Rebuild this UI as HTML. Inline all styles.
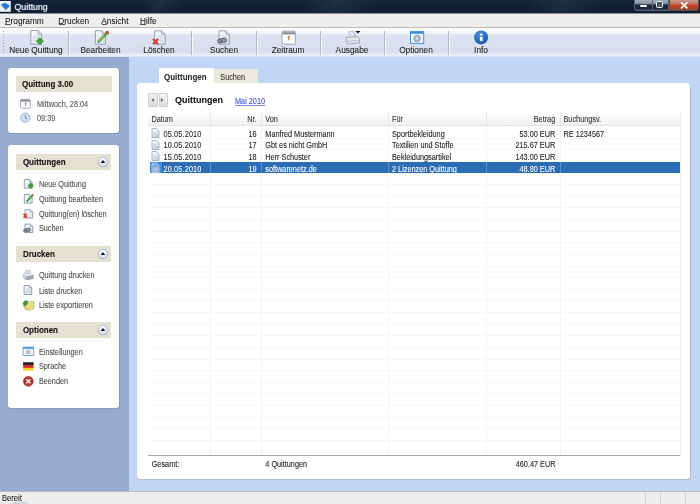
<!DOCTYPE html>
<html><head><meta charset="utf-8"><style>
html,body{margin:0;padding:0;width:700px;height:504px;overflow:hidden;background:#fff;}
body{position:relative;font-family:"Liberation Sans",sans-serif;}
.r{position:absolute;}
u{text-decoration-thickness:0.8px;text-underline-offset:0.6px;}
.t{position:absolute;white-space:nowrap;-webkit-text-stroke:0.08px currentColor;}
</style></head><body>
<div id="w" style="position:absolute;left:0;top:0;width:700px;height:504px;will-change:transform;">
<div class="r" style="left:0px;top:0px;width:700px;height:13.2px;background:linear-gradient(#142439,#0e1c30);"></div>
<div class="r" style="left:0px;top:0px;width:700px;height:13.2px;background:linear-gradient(100deg,transparent 20%,rgba(120,150,180,0.10) 23%,transparent 26%,transparent 43%,rgba(120,150,180,0.12) 48%,transparent 54%,transparent 75%,rgba(120,150,180,0.10) 80%,transparent 86%);"></div>
<div class="r" style="left:0px;top:13.2px;width:700px;height:0.8px;background:#8a9098;"></div>
<svg class="r" style="left:0;top:0" width="13" height="13" viewBox="0 0 13 13"><rect x="0" y="1" width="10.8" height="10.8" fill="#eef2f6"/><path d="M1 4.3 L5 2.8 L9.6 5.6 L5.2 9.2 Z" fill="#1f78d8"/><path d="M1 4.3 L1.3 6 L5.4 10.3 L5.2 9.2Z" fill="#8aa0b8"/><path d="M5.4 10.3 L9.6 6.6 L9.6 5.6 L5.2 9.2Z" fill="#1a5fae"/></svg>
<div class="t" style="left:14.5px;top:2.65px;font-size:8.8px;line-height:8.8px;color:#f4f8ff;transform:scaleY(1.12);transform-origin:0 7.45px;text-shadow:0 0 1.5px rgba(160,190,230,0.6);">Quittung</div>
<div class="r" style="left:633.5px;top:0px;width:35px;height:11px;background:linear-gradient(#a3adba,#838fa0 38%,#222d3d 48%,#1a2535 80%,#334052);border:1px solid #5a6575;border-top:none;border-radius:0 0 0 3px;box-sizing:border-box;"></div>
<div class="r" style="left:652px;top:0px;width:1px;height:11px;background:#596474;"></div>
<div class="r" style="left:639.5px;top:5.4px;width:7.5px;height:1.9px;background:#f4f6f8;border-radius:1px;"></div>
<div class="r" style="left:656.3px;top:1.4px;width:6.6px;height:6.6px;border:1.5px solid #eef1f4;border-radius:1.5px;box-sizing:border-box;background:#4a5566;"></div>
<div class="r" style="left:668.5px;top:0px;width:30.5px;height:11px;background:linear-gradient(#c99a8a,#b9786a 35%,#d9441e 50%,#c2401f 62%,#8f4a3c 100%);border:1px solid #5e4a48;border-top:none;border-radius:0 0 3px 0;box-sizing:border-box;"></div>
<svg class="r" style="left:668.5px;top:0" width="31" height="11" viewBox="0 0 31 11"><path d="M12 2.4 L18.4 8.4 M18.4 2.4 L12 8.4" stroke="#fff" stroke-width="1.6"/></svg>
<div class="r" style="left:0px;top:14px;width:700px;height:13.3px;background:#efeeed;"></div>
<div class="r" style="left:0px;top:27px;width:700px;height:1px;background:#bcbcbc;"></div>
<div class="t" style="left:5px;top:16.57px;font-size:8.3px;line-height:8.3px;color:#1a1a1a;transform:scaleY(1.12);transform-origin:0 7.03px;">Programm</div>
<div class="r" style="left:5.3px;top:24.1px;width:5.5px;height:0.8px;background:#555;"></div>
<div class="t" style="left:58.3px;top:16.57px;font-size:8.3px;line-height:8.3px;color:#1a1a1a;transform:scaleY(1.12);transform-origin:0 7.03px;">Drucken</div>
<div class="r" style="left:58.599999999999994px;top:24.1px;width:6px;height:0.8px;background:#555;"></div>
<div class="t" style="left:101.3px;top:16.57px;font-size:8.3px;line-height:8.3px;color:#1a1a1a;transform:scaleY(1.12);transform-origin:0 7.03px;">Ansicht</div>
<div class="r" style="left:101.6px;top:24.1px;width:5.5px;height:0.8px;background:#555;"></div>
<div class="t" style="left:140px;top:16.57px;font-size:8.3px;line-height:8.3px;color:#1a1a1a;transform:scaleY(1.12);transform-origin:0 7.03px;">Hilfe</div>
<div class="r" style="left:140.3px;top:24.1px;width:6px;height:0.8px;background:#555;"></div>
<div class="r" style="left:0px;top:28px;width:700px;height:29px;background:linear-gradient(#fdfdfe 0px,#f6f7fb 5px,#dde2f1 7px,#d9dff0 24px,#e9ecf6 26.5px,#eef1f8 28px,#c9d3e6 29px);"></div>
<div class="r" style="left:3px;top:31px;width:1px;height:24px;background-image:linear-gradient(#9aa3b3 50%,transparent 50%);background-size:1px 3px;"></div>
<div class="r" style="left:68px;top:31px;width:1px;height:24px;background:#aeb5c2;"></div>
<div class="r" style="left:69px;top:31px;width:1px;height:24px;background:#fbfcfe;"></div>
<div class="r" style="left:191px;top:31px;width:1px;height:24px;background:#aeb5c2;"></div>
<div class="r" style="left:192px;top:31px;width:1px;height:24px;background:#fbfcfe;"></div>
<div class="r" style="left:256px;top:31px;width:1px;height:24px;background:#aeb5c2;"></div>
<div class="r" style="left:257px;top:31px;width:1px;height:24px;background:#fbfcfe;"></div>
<div class="r" style="left:320px;top:31px;width:1px;height:24px;background:#aeb5c2;"></div>
<div class="r" style="left:321px;top:31px;width:1px;height:24px;background:#fbfcfe;"></div>
<div class="r" style="left:384px;top:31px;width:1px;height:24px;background:#aeb5c2;"></div>
<div class="r" style="left:385px;top:31px;width:1px;height:24px;background:#fbfcfe;"></div>
<div class="r" style="left:448px;top:31px;width:1px;height:24px;background:#aeb5c2;"></div>
<div class="r" style="left:449px;top:31px;width:1px;height:24px;background:#fbfcfe;"></div>
<div class="t" style="left:-64px;width:200px;text-align:center;top:46.37px;font-size:8.3px;line-height:8.3px;color:#1e1e1e;transform:scaleY(1.12);transform-origin:0 7.03px;">Neue Quittung</div>
<div class="t" style="left:0.5px;width:200px;text-align:center;top:46.37px;font-size:8.3px;line-height:8.3px;color:#1e1e1e;transform:scaleY(1.12);transform-origin:0 7.03px;">Bearbeiten</div>
<div class="t" style="left:59px;width:200px;text-align:center;top:46.37px;font-size:8.3px;line-height:8.3px;color:#1e1e1e;transform:scaleY(1.12);transform-origin:0 7.03px;">Löschen</div>
<div class="t" style="left:124px;width:200px;text-align:center;top:46.37px;font-size:8.3px;line-height:8.3px;color:#1e1e1e;transform:scaleY(1.12);transform-origin:0 7.03px;">Suchen</div>
<div class="t" style="left:188px;width:200px;text-align:center;top:46.37px;font-size:8.3px;line-height:8.3px;color:#1e1e1e;transform:scaleY(1.12);transform-origin:0 7.03px;">Zeitraum</div>
<div class="t" style="left:252px;width:200px;text-align:center;top:46.37px;font-size:8.3px;line-height:8.3px;color:#1e1e1e;transform:scaleY(1.12);transform-origin:0 7.03px;">Ausgabe</div>
<div class="t" style="left:316px;width:200px;text-align:center;top:46.37px;font-size:8.3px;line-height:8.3px;color:#1e1e1e;transform:scaleY(1.12);transform-origin:0 7.03px;">Optionen</div>
<div class="t" style="left:381px;width:200px;text-align:center;top:46.37px;font-size:8.3px;line-height:8.3px;color:#1e1e1e;transform:scaleY(1.12);transform-origin:0 7.03px;">Info</div>
<div class="r" style="left:0px;top:57px;width:129px;height:434px;background:#96abd0;"></div>
<div class="r" style="left:129px;top:57px;width:571px;height:434px;background:#c1d5f4;"></div>
<div class="r" style="left:0px;top:491px;width:700px;height:13px;background:#eeedeb;border-top:1px solid #b9bbbf;box-sizing:border-box;"></div>
<div class="t" style="left:2px;top:495.17px;font-size:7.6px;line-height:7.6px;color:#222;transform:scaleY(1.12);transform-origin:0 6.43px;">Bereit</div>
<div class="r" style="left:11.5px;top:501.2px;width:17px;height:6px;border-radius:50%;background:linear-gradient(#dfe6ee,#aebccc);"></div>
<div class="r" style="left:645px;top:492px;width:1px;height:12px;background:#d4d2ce;"></div>
<div class="r" style="left:660px;top:492px;width:1px;height:12px;background:#d4d2ce;"></div>
<div class="r" style="left:685px;top:492px;width:1px;height:12px;background:#d4d2ce;"></div>
<div class="r" style="left:8px;top:68.3px;width:111px;height:64.5px;background:#fff;border-radius:3px;box-shadow:0.4px 0.4px 0 0.4px rgba(100,120,150,0.45);"></div>
<div class="r" style="left:16px;top:76px;width:96px;height:16px;background:#e4e1d2;"></div>
<div class="t" style="left:22px;top:81.33px;font-size:8px;line-height:8px;color:#111;font-weight:bold;transform:scaleY(1.12);transform-origin:0 6.77px;">Quittung 3.00</div>
<div class="t" style="left:37px;top:100.92px;font-size:7.3px;line-height:7.3px;color:#555;transform:scaleY(1.12);transform-origin:0 6.18px;">Mittwoch, 28.04</div>
<div class="t" style="left:37px;top:114.92px;font-size:7.3px;line-height:7.3px;color:#555;transform:scaleY(1.12);transform-origin:0 6.18px;">09:39</div>
<div class="r" style="left:8px;top:144.5px;width:111px;height:263.7px;background:#fff;border-radius:3px;box-shadow:0.4px 0.4px 0 0.4px rgba(100,120,150,0.45);"></div>
<div class="r" style="left:15.7px;top:154.3px;width:95.6px;height:16.2px;background:#e4e1d2;"></div>
<div class="t" style="left:22.9px;top:158.93px;font-size:8px;line-height:8px;color:#111;font-weight:bold;transform:scaleY(1.12);transform-origin:0 6.77px;">Quittungen</div>
<svg class="r" style="left:96px;top:155.20000000000002px" width="14" height="14" viewBox="0 0 14 14"><defs><radialGradient id="cb154" cx="0.45" cy="0.35" r="0.7"><stop offset="0" stop-color="#ffffff"/><stop offset="0.6" stop-color="#e3e9f2"/><stop offset="1" stop-color="#b9c7da"/></radialGradient></defs><circle cx="7" cy="7" r="4.9" fill="url(#cb154)" stroke="#a3b3c9" stroke-width="0.8"/><path d="M4.6 8.1 L6.9 5.1 L9.2 8.1Z" fill="#111"/></svg>
<div class="r" style="left:15.7px;top:245.7px;width:95.6px;height:16.2px;background:#e4e1d2;"></div>
<div class="t" style="left:22.9px;top:250.73px;font-size:8px;line-height:8px;color:#111;font-weight:bold;transform:scaleY(1.12);transform-origin:0 6.77px;">Drucken</div>
<svg class="r" style="left:96px;top:246.6px" width="14" height="14" viewBox="0 0 14 14"><defs><radialGradient id="cb245" cx="0.45" cy="0.35" r="0.7"><stop offset="0" stop-color="#ffffff"/><stop offset="0.6" stop-color="#e3e9f2"/><stop offset="1" stop-color="#b9c7da"/></radialGradient></defs><circle cx="7" cy="7" r="4.9" fill="url(#cb245)" stroke="#a3b3c9" stroke-width="0.8"/><path d="M4.6 8.1 L6.9 5.1 L9.2 8.1Z" fill="#111"/></svg>
<div class="r" style="left:15.7px;top:322.1px;width:95.6px;height:16.2px;background:#e4e1d2;"></div>
<div class="t" style="left:22.9px;top:327.23px;font-size:8px;line-height:8px;color:#111;font-weight:bold;transform:scaleY(1.12);transform-origin:0 6.77px;">Optionen</div>
<svg class="r" style="left:96px;top:323.0px" width="14" height="14" viewBox="0 0 14 14"><defs><radialGradient id="cb322" cx="0.45" cy="0.35" r="0.7"><stop offset="0" stop-color="#ffffff"/><stop offset="0.6" stop-color="#e3e9f2"/><stop offset="1" stop-color="#b9c7da"/></radialGradient></defs><circle cx="7" cy="7" r="4.9" fill="url(#cb322)" stroke="#a3b3c9" stroke-width="0.8"/><path d="M4.6 8.1 L6.9 5.1 L9.2 8.1Z" fill="#111"/></svg>
<div class="t" style="left:38.9px;top:180.92px;font-size:7.3px;line-height:7.3px;color:#4a4a4a;transform:scaleY(1.12);transform-origin:0 6.18px;">Neue Quittung</div>
<div class="t" style="left:38.9px;top:195.77px;font-size:7.3px;line-height:7.3px;color:#4a4a4a;transform:scaleY(1.12);transform-origin:0 6.18px;">Quittung bearbeiten</div>
<div class="t" style="left:38.9px;top:210.52px;font-size:7.3px;line-height:7.3px;color:#4a4a4a;transform:scaleY(1.12);transform-origin:0 6.18px;">Quittung(en) löschen</div>
<div class="t" style="left:38.9px;top:225.22px;font-size:7.3px;line-height:7.3px;color:#4a4a4a;transform:scaleY(1.12);transform-origin:0 6.18px;">Suchen</div>
<div class="t" style="left:38.9px;top:272.42px;font-size:7.3px;line-height:7.3px;color:#4a4a4a;transform:scaleY(1.12);transform-origin:0 6.18px;">Quittung drucken</div>
<div class="t" style="left:38.9px;top:287.52px;font-size:7.3px;line-height:7.3px;color:#4a4a4a;transform:scaleY(1.12);transform-origin:0 6.18px;">Liste drucken</div>
<div class="t" style="left:38.9px;top:302.42px;font-size:7.3px;line-height:7.3px;color:#4a4a4a;transform:scaleY(1.12);transform-origin:0 6.18px;">Liste exportieren</div>
<div class="t" style="left:38.9px;top:348.82px;font-size:7.3px;line-height:7.3px;color:#4a4a4a;transform:scaleY(1.12);transform-origin:0 6.18px;">Einstellungen</div>
<div class="t" style="left:38.9px;top:363.42px;font-size:7.3px;line-height:7.3px;color:#4a4a4a;transform:scaleY(1.12);transform-origin:0 6.18px;">Sprache</div>
<div class="t" style="left:38.9px;top:378.27px;font-size:7.3px;line-height:7.3px;color:#4a4a4a;transform:scaleY(1.12);transform-origin:0 6.18px;">Beenden</div>
<div class="r" style="left:158.7px;top:67.7px;width:55.6px;height:16px;background:#fff;border-radius:1px 1px 0 0;"></div>
<div class="r" style="left:214.3px;top:69px;width:43.5px;height:14px;background:#ebe8dc;"></div>
<div class="t" style="left:164px;top:73.53px;font-size:8px;line-height:8px;color:#222;font-weight:bold;transform:scaleY(1.12);transform-origin:0 6.77px;-webkit-text-stroke:0;">Quittungen</div>
<div class="t" style="left:220.3px;top:73.62px;font-size:7.3px;line-height:7.3px;color:#333;transform:scaleY(1.12);transform-origin:0 6.18px;">Suchen</div>
<div class="r" style="left:137px;top:83px;width:553.3px;height:396.3px;background:#fff;border-radius:3px;box-shadow:0.4px 0.4px 0 0.4px rgba(130,150,180,0.45);"></div>
<div class="r" style="left:148px;top:93px;width:10px;height:13.6px;background:linear-gradient(#f4f4f4,#dcdcdc);border:1px solid #cdcdcd;box-sizing:border-box;border-radius:1px;"></div>
<div class="r" style="left:158.6px;top:93px;width:9.8px;height:13.6px;background:linear-gradient(#f4f4f4,#dcdcdc);border:1px solid #cdcdcd;box-sizing:border-box;border-radius:1px;"></div>
<svg class="r" style="left:148px;top:93px" width="20" height="14" viewBox="0 0 20 14"><path d="M3.4 7 L5.8 5 L5.8 9Z" fill="#4b6aa6"/><path d="M12.9 5 L15.3 7 L12.9 9Z" fill="#4b6aa6"/></svg>
<div class="t" style="left:175px;top:95.88px;font-size:9px;line-height:9px;color:#111;font-weight:bold;transform:scaleY(1.04);transform-origin:0 7.62px;">Quittungen</div>
<div class="t" style="left:235px;top:97.82px;font-size:7.3px;line-height:7.3px;color:#3a4ed6;transform:scaleY(1.12);transform-origin:0 6.18px;">Mai 2010</div>
<div class="r" style="left:235px;top:104.5px;width:30px;height:0.8px;background:#7a86e8;"></div>
<div class="r" style="left:148px;top:112.3px;width:532.3px;height:14px;background:linear-gradient(#ffffff,#f9f9f9 45%,#f1f1f1);border-bottom:1px solid #e2e2e2;box-sizing:border-box;"></div>
<div class="r" style="left:210px;top:112.5px;width:1px;height:14px;background:#e4e4e4;"></div>
<div class="r" style="left:210px;top:126px;width:1px;height:329px;background-image:linear-gradient(#eeeeee 60%,transparent 60%);background-size:1px 2.5px;"></div>
<div class="r" style="left:260.8px;top:112.5px;width:1px;height:14px;background:#e4e4e4;"></div>
<div class="r" style="left:260.8px;top:126px;width:1px;height:329px;background-image:linear-gradient(#eeeeee 60%,transparent 60%);background-size:1px 2.5px;"></div>
<div class="r" style="left:388px;top:112.5px;width:1px;height:14px;background:#e4e4e4;"></div>
<div class="r" style="left:388px;top:126px;width:1px;height:329px;background-image:linear-gradient(#eeeeee 60%,transparent 60%);background-size:1px 2.5px;"></div>
<div class="r" style="left:486.2px;top:112.5px;width:1px;height:14px;background:#e4e4e4;"></div>
<div class="r" style="left:486.2px;top:126px;width:1px;height:329px;background-image:linear-gradient(#eeeeee 60%,transparent 60%);background-size:1px 2.5px;"></div>
<div class="r" style="left:559.6px;top:112.5px;width:1px;height:14px;background:#e4e4e4;"></div>
<div class="r" style="left:559.6px;top:126px;width:1px;height:329px;background-image:linear-gradient(#eeeeee 60%,transparent 60%);background-size:1px 2.5px;"></div>
<div class="r" style="left:680px;top:112.5px;width:1px;height:342.5px;background:#ececec;"></div>
<div class="t" style="left:151.4px;top:115.82px;font-size:7.3px;line-height:7.3px;color:#333;transform:scaleY(1.12);transform-origin:0 6.18px;">Datum</div>
<div class="t" style="right:443.5px;top:115.82px;font-size:7.3px;line-height:7.3px;color:#333;transform:scaleY(1.12);transform-origin:0 6.18px;">Nr.</div>
<div class="t" style="left:265.3px;top:115.82px;font-size:7.3px;line-height:7.3px;color:#333;transform:scaleY(1.12);transform-origin:0 6.18px;">Von</div>
<div class="t" style="left:392px;top:115.82px;font-size:7.3px;line-height:7.3px;color:#333;transform:scaleY(1.12);transform-origin:0 6.18px;">Für</div>
<div class="t" style="right:144.79999999999995px;top:115.82px;font-size:7.3px;line-height:7.3px;color:#333;transform:scaleY(1.12);transform-origin:0 6.18px;">Betrag</div>
<div class="t" style="left:563.5px;top:115.82px;font-size:7.3px;line-height:7.3px;color:#333;transform:scaleY(1.12);transform-origin:0 6.18px;">Buchungsv.</div>
<div class="r" style="left:148px;top:137.63px;width:532.3px;height:1px;background-image:linear-gradient(90deg,#f0f0f0 60%,transparent 60%);background-size:2px 1px;"></div>
<div class="r" style="left:148px;top:149.26px;width:532.3px;height:1px;background-image:linear-gradient(90deg,#f0f0f0 60%,transparent 60%);background-size:2px 1px;"></div>
<div class="r" style="left:148px;top:160.89px;width:532.3px;height:1px;background-image:linear-gradient(90deg,#f0f0f0 60%,transparent 60%);background-size:2px 1px;"></div>
<div class="r" style="left:148px;top:172.52px;width:532.3px;height:1px;background-image:linear-gradient(90deg,#f0f0f0 60%,transparent 60%);background-size:2px 1px;"></div>
<div class="r" style="left:148px;top:184.15px;width:532.3px;height:1px;background-image:linear-gradient(90deg,#f0f0f0 60%,transparent 60%);background-size:2px 1px;"></div>
<div class="r" style="left:148px;top:195.78px;width:532.3px;height:1px;background-image:linear-gradient(90deg,#f0f0f0 60%,transparent 60%);background-size:2px 1px;"></div>
<div class="r" style="left:148px;top:207.41000000000003px;width:532.3px;height:1px;background-image:linear-gradient(90deg,#f0f0f0 60%,transparent 60%);background-size:2px 1px;"></div>
<div class="r" style="left:148px;top:219.04000000000002px;width:532.3px;height:1px;background-image:linear-gradient(90deg,#f0f0f0 60%,transparent 60%);background-size:2px 1px;"></div>
<div class="r" style="left:148px;top:230.67000000000002px;width:532.3px;height:1px;background-image:linear-gradient(90deg,#f0f0f0 60%,transparent 60%);background-size:2px 1px;"></div>
<div class="r" style="left:148px;top:242.3px;width:532.3px;height:1px;background-image:linear-gradient(90deg,#f0f0f0 60%,transparent 60%);background-size:2px 1px;"></div>
<div class="r" style="left:148px;top:253.93px;width:532.3px;height:1px;background-image:linear-gradient(90deg,#f0f0f0 60%,transparent 60%);background-size:2px 1px;"></div>
<div class="r" style="left:148px;top:265.56px;width:532.3px;height:1px;background-image:linear-gradient(90deg,#f0f0f0 60%,transparent 60%);background-size:2px 1px;"></div>
<div class="r" style="left:148px;top:277.19px;width:532.3px;height:1px;background-image:linear-gradient(90deg,#f0f0f0 60%,transparent 60%);background-size:2px 1px;"></div>
<div class="r" style="left:148px;top:288.82000000000005px;width:532.3px;height:1px;background-image:linear-gradient(90deg,#f0f0f0 60%,transparent 60%);background-size:2px 1px;"></div>
<div class="r" style="left:148px;top:300.45000000000005px;width:532.3px;height:1px;background-image:linear-gradient(90deg,#f0f0f0 60%,transparent 60%);background-size:2px 1px;"></div>
<div class="r" style="left:148px;top:312.08000000000004px;width:532.3px;height:1px;background-image:linear-gradient(90deg,#f0f0f0 60%,transparent 60%);background-size:2px 1px;"></div>
<div class="r" style="left:148px;top:323.71000000000004px;width:532.3px;height:1px;background-image:linear-gradient(90deg,#f0f0f0 60%,transparent 60%);background-size:2px 1px;"></div>
<div class="r" style="left:148px;top:335.34000000000003px;width:532.3px;height:1px;background-image:linear-gradient(90deg,#f0f0f0 60%,transparent 60%);background-size:2px 1px;"></div>
<div class="r" style="left:148px;top:346.97px;width:532.3px;height:1px;background-image:linear-gradient(90deg,#f0f0f0 60%,transparent 60%);background-size:2px 1px;"></div>
<div class="r" style="left:148px;top:358.6px;width:532.3px;height:1px;background-image:linear-gradient(90deg,#f0f0f0 60%,transparent 60%);background-size:2px 1px;"></div>
<div class="r" style="left:148px;top:370.23px;width:532.3px;height:1px;background-image:linear-gradient(90deg,#f0f0f0 60%,transparent 60%);background-size:2px 1px;"></div>
<div class="r" style="left:148px;top:381.86px;width:532.3px;height:1px;background-image:linear-gradient(90deg,#f0f0f0 60%,transparent 60%);background-size:2px 1px;"></div>
<div class="r" style="left:148px;top:393.49px;width:532.3px;height:1px;background-image:linear-gradient(90deg,#f0f0f0 60%,transparent 60%);background-size:2px 1px;"></div>
<div class="r" style="left:148px;top:405.12px;width:532.3px;height:1px;background-image:linear-gradient(90deg,#f0f0f0 60%,transparent 60%);background-size:2px 1px;"></div>
<div class="r" style="left:148px;top:416.75px;width:532.3px;height:1px;background-image:linear-gradient(90deg,#f0f0f0 60%,transparent 60%);background-size:2px 1px;"></div>
<div class="r" style="left:148px;top:428.38px;width:532.3px;height:1px;background-image:linear-gradient(90deg,#f0f0f0 60%,transparent 60%);background-size:2px 1px;"></div>
<div class="r" style="left:148px;top:440.01000000000005px;width:532.3px;height:1px;background-image:linear-gradient(90deg,#f0f0f0 60%,transparent 60%);background-size:2px 1px;"></div>
<div class="r" style="left:148px;top:451.64000000000004px;width:532.3px;height:1px;background-image:linear-gradient(90deg,#f0f0f0 60%,transparent 60%);background-size:2px 1px;"></div>
<svg class="r" style="left:151.3px;top:128.0px" width="9" height="10" viewBox="0 0 9 10"><defs><linearGradient id="rowdoc" x1="0" y1="0" x2="0.3" y2="1"><stop offset="0" stop-color="#ffffff"/><stop offset="1" stop-color="#cdd8e8"/></linearGradient></defs><path d="M1 0.5 H5.5 L8 3 V9.5 H1Z" fill="url(#rowdoc)" stroke="#8d9fb8" stroke-width="0.7"/><path d="M2.5 5 H6.5 M2.5 6.5 H6.5 M2.5 8 H6.5" stroke="#b8c6d8" stroke-width="0.6"/></svg>
<div class="t" style="left:163.5px;top:130.82px;font-size:7.3px;line-height:7.3px;color:#222;transform:scaleY(1.12);transform-origin:0 6.18px;letter-spacing:0.15px;">05.05.2010</div>
<div class="t" style="right:443.5px;top:130.82px;font-size:7.3px;line-height:7.3px;color:#222;transform:scaleY(1.12);transform-origin:0 6.18px;">16</div>
<div class="t" style="left:265.3px;top:130.82px;font-size:7.3px;line-height:7.3px;color:#222;transform:scaleY(1.12);transform-origin:0 6.18px;">Manfred Mustermann</div>
<div class="t" style="left:392px;top:130.82px;font-size:7.3px;line-height:7.3px;color:#222;transform:scaleY(1.12);transform-origin:0 6.18px;">Sportbekleidung</div>
<div class="t" style="right:144.79999999999995px;top:130.82px;font-size:7.3px;line-height:7.3px;color:#222;transform:scaleY(1.12);transform-origin:0 6.18px;">53.00 EUR</div>
<div class="t" style="left:563.5px;top:130.82px;font-size:7.3px;line-height:7.3px;color:#222;transform:scaleY(1.12);transform-origin:0 6.18px;">RE 1234567</div>
<svg class="r" style="left:151.3px;top:139.63px" width="9" height="10" viewBox="0 0 9 10"><defs><linearGradient id="rowdoc" x1="0" y1="0" x2="0.3" y2="1"><stop offset="0" stop-color="#ffffff"/><stop offset="1" stop-color="#cdd8e8"/></linearGradient></defs><path d="M1 0.5 H5.5 L8 3 V9.5 H1Z" fill="url(#rowdoc)" stroke="#8d9fb8" stroke-width="0.7"/><path d="M2.5 5 H6.5 M2.5 6.5 H6.5 M2.5 8 H6.5" stroke="#b8c6d8" stroke-width="0.6"/></svg>
<div class="t" style="left:163.5px;top:142.45px;font-size:7.3px;line-height:7.3px;color:#222;transform:scaleY(1.12);transform-origin:0 6.18px;letter-spacing:0.15px;">10.05.2010</div>
<div class="t" style="right:443.5px;top:142.45px;font-size:7.3px;line-height:7.3px;color:#222;transform:scaleY(1.12);transform-origin:0 6.18px;">17</div>
<div class="t" style="left:265.3px;top:142.45px;font-size:7.3px;line-height:7.3px;color:#222;transform:scaleY(1.12);transform-origin:0 6.18px;">Gbt es nicht GmbH</div>
<div class="t" style="left:392px;top:142.45px;font-size:7.3px;line-height:7.3px;color:#222;transform:scaleY(1.12);transform-origin:0 6.18px;">Textilien und Stoffe</div>
<div class="t" style="right:144.79999999999995px;top:142.45px;font-size:7.3px;line-height:7.3px;color:#222;transform:scaleY(1.12);transform-origin:0 6.18px;">215.67 EUR</div>
<svg class="r" style="left:151.3px;top:151.26px" width="9" height="10" viewBox="0 0 9 10"><defs><linearGradient id="rowdoc" x1="0" y1="0" x2="0.3" y2="1"><stop offset="0" stop-color="#ffffff"/><stop offset="1" stop-color="#cdd8e8"/></linearGradient></defs><path d="M1 0.5 H5.5 L8 3 V9.5 H1Z" fill="url(#rowdoc)" stroke="#8d9fb8" stroke-width="0.7"/><path d="M2.5 5 H6.5 M2.5 6.5 H6.5 M2.5 8 H6.5" stroke="#b8c6d8" stroke-width="0.6"/></svg>
<div class="t" style="left:163.5px;top:154.08px;font-size:7.3px;line-height:7.3px;color:#222;transform:scaleY(1.12);transform-origin:0 6.18px;letter-spacing:0.15px;">15.05.2010</div>
<div class="t" style="right:443.5px;top:154.08px;font-size:7.3px;line-height:7.3px;color:#222;transform:scaleY(1.12);transform-origin:0 6.18px;">18</div>
<div class="t" style="left:265.3px;top:154.08px;font-size:7.3px;line-height:7.3px;color:#222;transform:scaleY(1.12);transform-origin:0 6.18px;">Herr Schuster</div>
<div class="t" style="left:392px;top:154.08px;font-size:7.3px;line-height:7.3px;color:#222;transform:scaleY(1.12);transform-origin:0 6.18px;">Bekleidungsartikel</div>
<div class="t" style="right:144.79999999999995px;top:154.08px;font-size:7.3px;line-height:7.3px;color:#222;transform:scaleY(1.12);transform-origin:0 6.18px;">143.00 EUR</div>
<div class="r" style="left:150px;top:162.08999999999997px;width:530.3px;height:11.4px;background:#2a6db5;"></div>
<div class="r" style="left:150px;top:162.08999999999997px;width:12px;height:11.4px;background:#3f8ddd;"></div>
<div class="r" style="left:210px;top:162.08999999999997px;width:1px;height:11.4px;background:#5d8fc8;"></div>
<div class="r" style="left:260.8px;top:162.08999999999997px;width:1px;height:11.4px;background:#5d8fc8;"></div>
<div class="r" style="left:388px;top:162.08999999999997px;width:1px;height:11.4px;background:#5d8fc8;"></div>
<div class="r" style="left:486.2px;top:162.08999999999997px;width:1px;height:11.4px;background:#5d8fc8;"></div>
<div class="r" style="left:559.6px;top:162.08999999999997px;width:1px;height:11.4px;background:#5d8fc8;"></div>
<svg class="r" style="left:151.3px;top:162.89px" width="9" height="10" viewBox="0 0 9 10"><defs><linearGradient id="rowdoc" x1="0" y1="0" x2="0.3" y2="1"><stop offset="0" stop-color="#ffffff"/><stop offset="1" stop-color="#cdd8e8"/></linearGradient></defs><path d="M1 0.5 H5.5 L8 3 V9.5 H1Z" fill="#7fa6d6" stroke="#cfe0f3" stroke-width="0.7"/><path d="M2.5 5 H6.5 M2.5 6.5 H6.5 M2.5 8 H6.5" stroke="#e8f0fa" stroke-width="0.6"/></svg>
<div class="t" style="left:163.5px;top:165.71px;font-size:7.3px;line-height:7.3px;color:#fff;transform:scaleY(1.12);transform-origin:0 6.18px;letter-spacing:0.15px;">20.05.2010</div>
<div class="t" style="right:443.5px;top:165.71px;font-size:7.3px;line-height:7.3px;color:#fff;transform:scaleY(1.12);transform-origin:0 6.18px;">19</div>
<div class="t" style="left:265.3px;top:165.71px;font-size:7.3px;line-height:7.3px;color:#fff;transform:scaleY(1.12);transform-origin:0 6.18px;">softwarenetz.de</div>
<div class="t" style="left:392px;top:165.71px;font-size:7.3px;line-height:7.3px;color:#fff;transform:scaleY(1.12);transform-origin:0 6.18px;">2 Lizenzen Quittung</div>
<div class="t" style="right:144.79999999999995px;top:165.71px;font-size:7.3px;line-height:7.3px;color:#fff;transform:scaleY(1.12);transform-origin:0 6.18px;">48.80 EUR</div>
<div class="r" style="left:148px;top:455px;width:532.3px;height:1px;background:#a8a8a8;"></div>
<div class="t" style="left:151.7px;top:460.82px;font-size:7.3px;line-height:7.3px;color:#222;transform:scaleY(1.12);transform-origin:0 6.18px;">Gesamt:</div>
<div class="t" style="left:265.3px;top:460.82px;font-size:7.3px;line-height:7.3px;color:#222;transform:scaleY(1.12);transform-origin:0 6.18px;">4 Quittungen</div>
<div class="t" style="right:144.5px;top:460.82px;font-size:7.3px;line-height:7.3px;color:#222;transform:scaleY(1.12);transform-origin:0 6.18px;">460.47 EUR</div>
<svg class="r" style="left:0;top:0" width="700" height="504" viewBox="0 0 700 504"><defs><linearGradient id="gdoc" x1="0" y1="0" x2="1" y2="1"><stop offset="0" stop-color="#ffffff"/><stop offset="1" stop-color="#d9e1ec"/></linearGradient></defs><path d="M30.8 30.5 H37.97 L41.6 34.13 V44.2 H30.8Z" fill="url(#gdoc)" stroke="#8796ad" stroke-width="0.9"/><path d="M37.97 30.5 V34.13 H41.6" fill="#c9d3e2" stroke="#8796ad" stroke-width="0.6"/><path d="M32.896 36.17 H39.504000000000005" stroke="#c3cddb" stroke-width="0.7"/><path d="M32.896 38.38 H39.504000000000005" stroke="#c3cddb" stroke-width="0.7"/><path d="M32.896 40.58 H39.504000000000005" stroke="#c3cddb" stroke-width="0.7"/><path d="M39.9 37.6 L43.6 41.2 L39.9 44.8 L36.2 41.2Z" fill="#3fa33a" stroke="#2f8a2c" stroke-width="0.5"/><path d="M95.4 30.8 H102.115 L105.5 34.185 V44.2 H95.4Z" fill="url(#gdoc)" stroke="#8796ad" stroke-width="0.9"/><path d="M102.115 30.8 V34.185 H105.5" fill="#c9d3e2" stroke="#8796ad" stroke-width="0.6"/><path d="M97.342 36.35 H103.558" stroke="#c3cddb" stroke-width="0.7"/><path d="M97.342 38.51 H103.558" stroke="#c3cddb" stroke-width="0.7"/><path d="M97.342 40.67 H103.558" stroke="#c3cddb" stroke-width="0.7"/><path d="M98.6 41.6 L107 33.2" stroke="#4aa83b" stroke-width="2.6" stroke-linecap="round"/><path d="M99 41 L104 36" stroke="#d6d64a" stroke-width="0.9"/><circle cx="107.2" cy="32.7" r="1.9" fill="#c8553a"/><path d="M154.6 30.8 H161.64 L165.2 34.36 V44.2 H154.6Z" fill="url(#gdoc)" stroke="#8796ad" stroke-width="0.9"/><path d="M161.64 30.8 V34.36 H165.2" fill="#c9d3e2" stroke="#8796ad" stroke-width="0.6"/><path d="M156.652 36.35 H163.148" stroke="#c3cddb" stroke-width="0.7"/><path d="M156.652 38.51 H163.148" stroke="#c3cddb" stroke-width="0.7"/><path d="M156.652 40.67 H163.148" stroke="#c3cddb" stroke-width="0.7"/><path d="M153 39 L158 44 M158 39 L153 44" stroke="#d0402a" stroke-width="2.2"/><path d="M219.1 30.8 H225.945 L229.4 34.255 V44.2 H219.1Z" fill="url(#gdoc)" stroke="#8796ad" stroke-width="0.9"/><path d="M225.945 30.8 V34.255 H229.4" fill="#c9d3e2" stroke="#8796ad" stroke-width="0.6"/><path d="M221.08599999999998 36.35 H227.414" stroke="#c3cddb" stroke-width="0.7"/><path d="M221.08599999999998 38.51 H227.414" stroke="#c3cddb" stroke-width="0.7"/><path d="M221.08599999999998 40.67 H227.414" stroke="#c3cddb" stroke-width="0.7"/><ellipse cx="220.2" cy="41" rx="2.6" ry="2.2" fill="#8a8f98" stroke="#4a4e55" stroke-width="0.8"/><ellipse cx="224" cy="40.2" rx="2.6" ry="2.2" fill="#9aa0a8" stroke="#3f434a" stroke-width="0.8"/><rect x="282" y="31.2" width="13.3" height="13" rx="1.5" fill="#fbfbfd" stroke="#8e9bb0" stroke-width="0.9"/><rect x="282.4" y="31.6" width="12.5" height="2.8" fill="#8d9096"/><path d="M284.5 31.8 V33 M286.8 31.8 V33 M289.1 31.8 V33 M291.4 31.8 V33 M293.2 31.8 V33" stroke="#d8dadd" stroke-width="0.7"/><path d="M287.6 36.6 L289.6 35.8 L289.4 40.2 L288.3 40.2 L288.4 37.2 L287.7 37.5Z" fill="#dc5a26"/><path d="M348.5 31.5 L354 31 L355.5 37 L349.5 37.5Z" fill="#d7e6f4" stroke="#9fb0c4" stroke-width="0.6"/><path d="M346 37.5 L357.5 36.5 L359.5 39 L359.5 43 L348 44 L346 41.5Z" fill="#e2e4e8" stroke="#8e949c" stroke-width="0.7"/><path d="M346.5 41.5 L359 40.5" stroke="#b5b9bf" stroke-width="0.8"/><path d="M355.3 31.1 H360.5 L357.9 33.5Z" fill="#111"/><rect x="410.5" y="31.6" width="13.2" height="11.8" fill="#f4f7fc" stroke="#3d8ee8" stroke-width="1"/><rect x="410.5" y="31.6" width="13.2" height="2.2" fill="#3d8ee8"/><circle cx="417.1" cy="38.5" r="3.3" fill="#aab4c6" stroke="#8d97aa" stroke-width="0.8"/><circle cx="417.1" cy="38.5" r="1.2" fill="#e6ebf3"/><defs><radialGradient id="ginfo" cx="0.4" cy="0.3" r="0.75"><stop offset="0" stop-color="#3d8ce0"/><stop offset="1" stop-color="#1659b2"/></radialGradient></defs><circle cx="481.1" cy="37.4" r="7" fill="url(#ginfo)"/><rect x="479.9" y="36.8" width="2.6" height="4.3" fill="#fff"/><rect x="479.9" y="33.6" width="2.6" height="1.9" fill="#fff"/><rect x="20.5" y="99.3" width="9.8" height="9" rx="1" fill="#fbfbfd" stroke="#8e9bb0" stroke-width="0.8"/><rect x="20.8" y="99.6" width="9.2" height="2" fill="#8b8f96"/><path d="M24.8 102.5 H26.4 L26 105.6 H25.1Z" fill="#e06a2c"/><circle cx="25.3" cy="117.7" r="4.6" fill="#cfe2f6" stroke="#7f9fc6" stroke-width="0.8"/><path d="M25.3 115 V117.8 L27.2 119" stroke="#3a5a8a" stroke-width="0.7" fill="none"/><path d="M24.3 179.5 H29.6 L32.1 182 V188.1 H24.3Z" fill="url(#gdoc)" stroke="#8796ad" stroke-width="0.9"/><path d="M29.6 179.5 V182 H32.1" fill="#c9d3e2" stroke="#8796ad" stroke-width="0.6"/><path d="M30.7 182.6 L33.9 185.8 L30.7 189 L27.5 185.8Z" fill="#3d9f36"/><path d="M24.3 194.5 H29.6 L32.1 197 V203.1 H24.3Z" fill="url(#gdoc)" stroke="#8796ad" stroke-width="0.9"/><path d="M29.6 194.5 V197 H32.1" fill="#c9d3e2" stroke="#8796ad" stroke-width="0.6"/><path d="M26.5 201.5 L32.5 195.5" stroke="#4aa83b" stroke-width="1.8"/><circle cx="32.6" cy="195" r="1.1" fill="#c8553a"/><path d="M25.0 209.7 H30.299999999999997 L32.8 212.2 V218.0 H25.0Z" fill="url(#gdoc)" stroke="#8796ad" stroke-width="0.9"/><path d="M30.299999999999997 209.7 V212.2 H32.8" fill="#c9d3e2" stroke="#8796ad" stroke-width="0.6"/><path d="M23.5 213.8 L27 217.8 M27 213.8 L23.5 217.8" stroke="#d0402a" stroke-width="1.6"/><path d="M25.0 224.1 H30.299999999999997 L32.8 226.6 V232.6 H25.0Z" fill="url(#gdoc)" stroke="#8796ad" stroke-width="0.9"/><path d="M30.299999999999997 224.1 V226.6 H32.8" fill="#c9d3e2" stroke="#8796ad" stroke-width="0.6"/><ellipse cx="25.5" cy="230.5" rx="2" ry="1.7" fill="#8a8f98" stroke="#4a4e55" stroke-width="0.7"/><ellipse cx="28.5" cy="229.8" rx="2" ry="1.7" fill="#9aa0a8" stroke="#3f434a" stroke-width="0.7"/><path d="M24.3 273.2 L25.8 269.9 L30.6 270.6 L29.6 273.6Z" fill="#d2e4f6" stroke="#9fb0c4" stroke-width="0.4"/><path d="M22.9 274.3 L30.4 273.2 L33.6 275.2 L26.1 276.4Z" fill="#eceef2" stroke="#a0a6ae" stroke-width="0.4"/><path d="M22.9 274.3 L26.1 276.4 L26.1 280.2 L22.9 278.2Z" fill="#c9cdd3"/><path d="M26.1 276.4 L33.6 275.2 L33.6 279 L26.1 280.2Z" fill="#9ea3aa"/><path d="M24.1 285.5 H29.400000000000002 L31.700000000000003 287.8 V294.5 H24.1Z" fill="url(#gdoc)" stroke="#8796ad" stroke-width="0.9"/><path d="M29.400000000000002 285.5 V287.8 H31.700000000000003" fill="#c9d3e2" stroke="#8796ad" stroke-width="0.6"/><path d="M25.492 289.20 H30.308" stroke="#c3cddb" stroke-width="0.7"/><path d="M25.492 290.70 H30.308" stroke="#c3cddb" stroke-width="0.7"/><path d="M25.492 292.20 H30.308" stroke="#c3cddb" stroke-width="0.7"/><path d="M25.5 303 Q28 301.2 30 301.8 L33.8 301.5 L34 308.6 Q30 310.4 26.5 310 Q24.6 307 25.5 303Z" fill="#e6df82" stroke="#b9a44e" stroke-width="0.6"/><path d="M22.8 302.8 Q24 300 27.5 300.5 Q28.6 302.5 27 305 Q25 306.5 23.5 306 Z" fill="#3f9a3a"/><path d="M23.6 305.5 L25.6 309.6" stroke="#c2b24c" stroke-width="1.1"/><rect x="23" y="347.1" width="10.7" height="8.4" fill="#f4f7fc" stroke="#4a96ea" stroke-width="0.8"/><rect x="23" y="347.1" width="10.7" height="1.7" fill="#4a96ea"/><circle cx="28.3" cy="352" r="2.3" fill="#b4bdcc"/><rect x="23.1" y="362.2" width="10.5" height="2.9" fill="#222"/><rect x="23.1" y="365.1" width="10.5" height="2.8" fill="#d2261e"/><rect x="23.1" y="367.9" width="10.5" height="2.7" fill="#f2d42a"/><circle cx="28.35" cy="381.3" r="4.9" fill="#b8362a" stroke="#8e2a20" stroke-width="0.6"/><path d="M26.3 379.3 L30.4 383.3 M30.4 379.3 L26.3 383.3" stroke="#fff" stroke-width="1.3"/></svg>
</div></body></html>
